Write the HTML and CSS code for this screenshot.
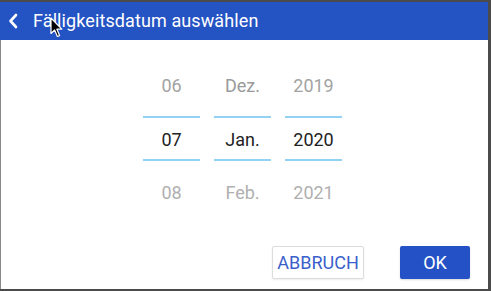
FILE: index.html
```html
<!DOCTYPE html>
<html lang="de">
<head>
    <meta charset="UTF-8">
    <meta name="viewport" content="width=device-width, initial-scale=1.0">
    <title>Fälligkeitsdatum auswählen</title>
    <link rel="stylesheet" href="styles.css">
</head>
<body>
    <div class="dialog">
        <div class="header">
            <svg class="back" width="10" height="16" viewBox="0 0 10 16">
                <path d="M8 2 L2.5 8 L8 14" fill="none" stroke="#fff" stroke-width="2.6" stroke-linecap="round" stroke-linejoin="round"/>
            </svg>
            <span class="title">Fälligkeitsdatum auswählen</span>
        </div>

        <div class="content">
            <div class="picker">
                <div class="column">
                    <div class="item prev">06</div>
                    <div class="item current">07</div>
                    <div class="item next">08</div>
                </div>
                <div class="column">
                    <div class="item prev">Dez.</div>
                    <div class="item current">Jan.</div>
                    <div class="item next">Feb.</div>
                </div>
                <div class="column">
                    <div class="item prev">2019</div>
                    <div class="item current">2020</div>
                    <div class="item next">2021</div>
                </div>
            </div>

            <div class="actions">
                <button class="btn btn-cancel">ABBRUCH</button>
                <button class="btn btn-ok">OK</button>
            </div>
        </div>
    </div>

    <!-- mauszeiger -->
    <svg class="cursor" width="13" height="21" viewBox="0 0 13 21">
        <path d="M1 1 L1 16.5 L4.6 13 L7.4 19.5 L9.6 18.6 L6.9 12.2 L11.8 12.2 Z" fill="#000" stroke="#fff" stroke-width="1.2" stroke-linejoin="round"/>
    </svg>
</body>
</html>
```

FILE: styles.css
```css
* {
    box-sizing: border-box;
}

body {
    margin: 0;
    width: 491px;
    height: 291px;
    background-color: #4b4b4b;
    font-family: Roboto, 'Liberation Sans', sans-serif;
    overflow: hidden;
}

.dialog {
    margin-top: 2px;
    width: 488px;
    height: 287px;
    display: flex;
    flex-direction: column;
    background-color: #fff;
}

.header {
    height: 38px;
    flex: 0 0 38px;
    display: flex;
    align-items: center;
    background-color: #2453c4;
    color: #fff;
}

.back {
    margin-left: 8px;
}

.title {
    margin-left: 15px;
    font-size: 18px;
    letter-spacing: 0.1px;
    padding-bottom: 1px;
}

.content {
    flex: 1;
    display: flex;
    flex-direction: column;
    border-left: 1px solid #8a8a8a;
}

.picker {
    display: flex;
    gap: 14px;
    padding-left: 142px;
    margin-top: 16px;
}

.column {
    width: 57px;
    display: flex;
    flex-direction: column;
    text-align: center;
    font-size: 18px;
}

.item.prev {
    height: 60px;
    line-height: 60px;
    color: #a3a3a3;
}

.item.current {
    height: 45px;
    padding-top: 3px;
    line-height: 38px;
    color: #222;
    border-top: 2px solid #93d2f2;
    border-bottom: 2px solid #93d2f2;
}

.item.next {
    height: 64px;
    line-height: 64px;
    color: #b0b0b0;
}

.column:nth-child(2) .item.prev {
    color: #9a9a9a;
}

.actions {
    display: flex;
    justify-content: flex-end;
    gap: 36px;
    margin-top: 21px;
    padding-right: 18px;
}

.btn {
    height: 33px;
    font-family: Roboto, 'Liberation Sans', sans-serif;
    font-size: 18px;
    border-radius: 2px;
    cursor: pointer;
}

.btn-cancel {
    width: 92px;
    padding: 0;
    background-color: #fff;
    color: #3a5fcb;
    border: 1px solid #dcdcdc;
    box-shadow: 0 1px 2px rgba(0, 0, 0, 0.08);
}

.btn-ok {
    width: 70px;
    background-color: #2452c6;
    color: #fff;
    border: none;
    box-shadow: 0 1px 2px rgba(0, 0, 0, 0.15);
}

.cursor {
    position: absolute;
    left: 50px;
    top: 17px;
}
```
